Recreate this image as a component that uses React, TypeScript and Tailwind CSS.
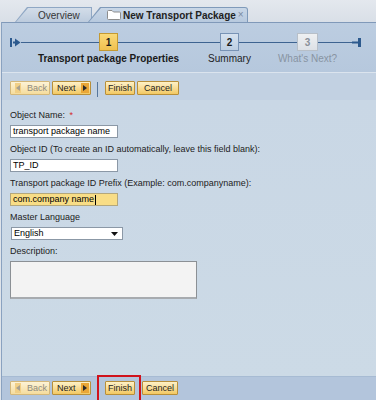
import React from "react";

const FONT = "font-['Liberation_Sans',Arial,sans-serif]";

function Btn({
  children,
  w,
  disabled,
}: {
  children: React.ReactNode;
  w: string;
  disabled?: boolean;
}) {
  return (
    <div
      className={
        "h-[14px] flex items-center rounded-[1px] border text-[9px] leading-[11px] " +
        w +
        (disabled
          ? " border-[#d3b77a] bg-linear-to-b from-[#fdf3d6] to-[#f5dc9c] text-[#8e8b80]"
          : " border-[#b88f3a] bg-linear-to-b from-[#fef1c6] to-[#f2c861] text-[#1e1e1e]")
      }
    >
      {children}
    </div>
  );
}

function Toolbar({ bottom }: { bottom?: boolean }) {
  return (
    <div className="flex items-start">
      <Btn w="w-[40px]" disabled>
        <div className="ml-[4px] flex h-[10px] w-[6px] items-center justify-center bg-[#f1cf86]">
          <svg width="4" height="6" viewBox="0 0 4 6">
            <path d="M4 0 L0 3 L4 6 Z" fill="#a7a08f" />
          </svg>
        </div>
        <span className="ml-[6px]">Back</span>
      </Btn>
      <div className="ml-[2px]">
        <Btn w="w-[39px]">
          <span className="ml-[4px]">Next</span>
          <div className="ml-auto mr-[1px] flex h-[10px] w-[8px] items-center justify-center bg-[#e9a637]">
            <svg width="4" height="6" viewBox="0 0 4 6">
              <path d="M0 0 L4 3 L0 6 Z" fill="#2a2a2a" />
            </svg>
          </div>
        </Btn>
      </div>
      {bottom ? (
        <>
          <div className="relative ml-[14px]">
            <Btn w="w-[30px] justify-center">Finish</Btn>
            <div className="pointer-events-none absolute -left-[8px] -right-[6px] -top-[6px] -bottom-[10px] border-2 border-[#d0121b]" />
          </div>
          <div className="ml-[7px]">
            <Btn w="w-[36px] justify-center">Cancel</Btn>
          </div>
        </>
      ) : (
        <>
          <div className="ml-[6px] mr-[7px] mt-[1px] h-[15px] w-px bg-[#56779d]" />
          <Btn w="w-[30px] justify-center">Finish</Btn>
          <div className="ml-[2px]">
            <Btn w="w-[42px] justify-center">Cancel</Btn>
          </div>
        </>
      )}
    </div>
  );
}

function Step({
  n,
  label,
  kind,
}: {
  n: string;
  label: string;
  kind: "active" | "next" | "off";
}) {
  const box =
    kind === "active"
      ? "border-[#c49a32] bg-linear-to-b from-[#f9d978] to-[#f0c04e] text-[#1b1b1b]"
      : kind === "next"
      ? "border-[#7893b5] bg-linear-to-b from-[#d6e2ef] to-[#bccee2] text-[#1b1b1b]"
      : "border-[#b7bfc8] bg-linear-to-b from-[#eef0f2] to-[#dde1e6] text-[#8a9099]";
  const lab =
    kind === "active"
      ? "font-bold text-[#1a1a1a]"
      : kind === "next"
      ? "font-normal text-[#1e1e1e]"
      : "font-normal text-[#8894a2]";
  return (
    <div
      className={
        "relative flex h-[18px] shrink-0 items-center justify-center border text-[10px] font-bold " +
        (kind === "off" ? "w-[21px] " : "w-[19px] ") +
        box
      }
    >
      {n}
      <div
        className={
          "absolute left-1/2 top-full mt-[3px] -translate-x-1/2 whitespace-nowrap text-[10px] leading-[12px] " +
          lab
        }
      >
        {label}
      </div>
    </div>
  );
}

function Label({ children }: { children: React.ReactNode }) {
  return <div className="h-[12px] text-[9px] leading-[12px] text-[#222]">{children}</div>;
}

export default function App() {
  return (
    <div className={"flex h-[400px] w-[376px] flex-col overflow-hidden bg-[#dfe4ea] " + FONT}>
      {/* tab strip */}
      <div className="flex h-[22px] shrink-0 items-end bg-linear-to-b from-[#e4e8ee] to-[#d9dfe7]">
        <div className="ml-[15px] h-[15px] w-[77px] bg-[#8fa7c4] [clip-path:polygon(12px_0,100%_0,100%_100%,0_100%)]">
          <div className="ml-[1px] mt-[1px] flex h-[14px] w-[75px] items-center bg-linear-to-b from-[#d3dde9] to-[#bccbdd] pl-[22px] text-[10px] text-[#353535] [clip-path:polygon(12px_0,100%_0,100%_100%,0_100%)]">
            Overview
          </div>
        </div>
        <div className="-ml-[4px] h-[15px] w-[160px] rounded-tr-[3px] bg-[#7f9aba] [clip-path:polygon(12px_0,100%_0,100%_100%,0_100%)]">
          <div className="ml-[1px] mt-[1px] flex h-[14px] w-[158px] items-center rounded-tr-[2px] bg-linear-to-b from-[#c9d7e7] to-[#b7c9de] pl-[18px] [clip-path:polygon(12px_0,100%_0,100%_100%,0_100%)]">
            <svg width="14" height="10" viewBox="0 0 14 10" className="shrink-0">
              <path
                d="M0.5 1.5 Q0.5 0.5 1.5 0.5 L5 0.5 L6.5 2 L12.5 2 Q13.5 2 13.5 3 L13.5 8.5 Q13.5 9.5 12.5 9.5 L1.5 9.5 Q0.5 9.5 0.5 8.5 Z"
                fill="#ffffff"
                stroke="#8d8d8d"
                strokeWidth="1"
              />
            </svg>
            <span className="ml-[2px] whitespace-nowrap text-[10px] font-bold text-[#222]">
              New Transport Package
            </span>
            <span className="ml-[2px] text-[10px] leading-none text-[#7a8aa1]">×</span>
          </div>
        </div>
      </div>

      {/* body */}
      <div className="ml-[1px] flex flex-1 flex-col border-l border-[#8aa2c0]">
        {/* roadmap */}
        <div className="h-[50px] shrink-0 border-t border-[#8099b9] bg-linear-to-b from-[#bccde1] to-[#b6c8dd] pl-[8px] pt-[10px]">
          <div className="flex h-[18px] items-center">
            <svg width="11" height="9" viewBox="0 0 11 9" className="shrink-0">
              <rect x="0" y="0" width="2" height="9" fill="#2d5a8e" />
              <rect x="3" y="3.5" width="3" height="2" fill="#2d5a8e" />
              <path d="M5 0.5 L10.5 4.5 L5 8.5 Z" fill="#2d5a8e" />
            </svg>
            <div className="h-px w-[78px] bg-[#3d6391]" />
            <Step n="1" label="Transport package Properties" kind="active" />
            <div className="h-px w-[102px] bg-[#3d6391]" />
            <Step n="2" label="Summary" kind="next" />
            <div className="h-px w-[58px] bg-[#3d6391]" />
            <Step n="3" label="What's Next?" kind="off" />
            <div className="h-px w-[34px] bg-[#3d6391]" />
            <svg width="9" height="9" viewBox="0 0 9 9" className="shrink-0">
              <rect x="0" y="3.5" width="7" height="2" fill="#2d5a8e" />
              <rect x="6" y="0" width="3" height="9" fill="#2d5a8e" />
            </svg>
          </div>
        </div>
        <div className="h-px shrink-0 bg-[#dbe4ee]" />

        {/* top toolbar */}
        <div className="h-[27px] shrink-0 bg-[#c2d1e2] pl-[8px] pt-[8px]">
          <Toolbar />
        </div>

        {/* form */}
        <div className="flex flex-1 flex-col bg-linear-to-b from-[#c9d7e5] to-[#ccdae6] pl-[8px] pt-[9px]">
          <Label>
            Object Name: <span className="ml-[2px] text-[#d42a2a]">*</span>
          </Label>
          <div className="mt-[4px] flex h-[13px] w-[108px] items-center border border-[#8b98a6] bg-white pl-[2px] text-[9px] text-black">
            transport package name
          </div>
          <div className="mt-[5px]">
            <Label>Object ID (To create an ID automatically, leave this field blank):</Label>
          </div>
          <div className="mt-[4px] flex h-[13px] w-[108px] items-center border border-[#8b98a6] bg-white pl-[2px] text-[9px] text-black">
            TP_ID
          </div>
          <div className="mt-[5px]">
            <Label>Transport package ID Prefix (Example: com.companyname):</Label>
          </div>
          <div className="mt-[4px] flex h-[13px] w-[108px] items-center border border-[#b3a77c] bg-[#f8dd86] pl-[2px] text-[9px] text-black">
            com.company name
            <span className="ml-px h-[10px] w-px bg-black" />
          </div>
          <div className="mt-[5px]">
            <Label>Master Language</Label>
          </div>
          <div className="ml-px mt-[4px] flex h-[13px] w-[112px] items-center border border-[#8b98a6] bg-white pl-[2px] text-[9px] text-black">
            English
            <svg width="7" height="4" viewBox="0 0 7 4" className="ml-auto mr-[4px]">
              <path d="M0 0 L7 0 L3.5 4 Z" fill="#111" />
            </svg>
          </div>
          <div className="mt-[5px]">
            <Label>Description:</Label>
          </div>
          <div className="mt-[4px] h-[38px] w-[187px] border border-b-2 border-[#8b9095] border-b-[#a7abaf] bg-[#f3f3f3]" />
        </div>

        {/* bottom toolbar */}
        <div className="h-[24px] shrink-0 border-t border-[#a7bbd3] bg-[#b3c5dc] pl-[8px] pt-[4px]">
          <Toolbar bottom />
        </div>
      </div>
    </div>
  );
}
